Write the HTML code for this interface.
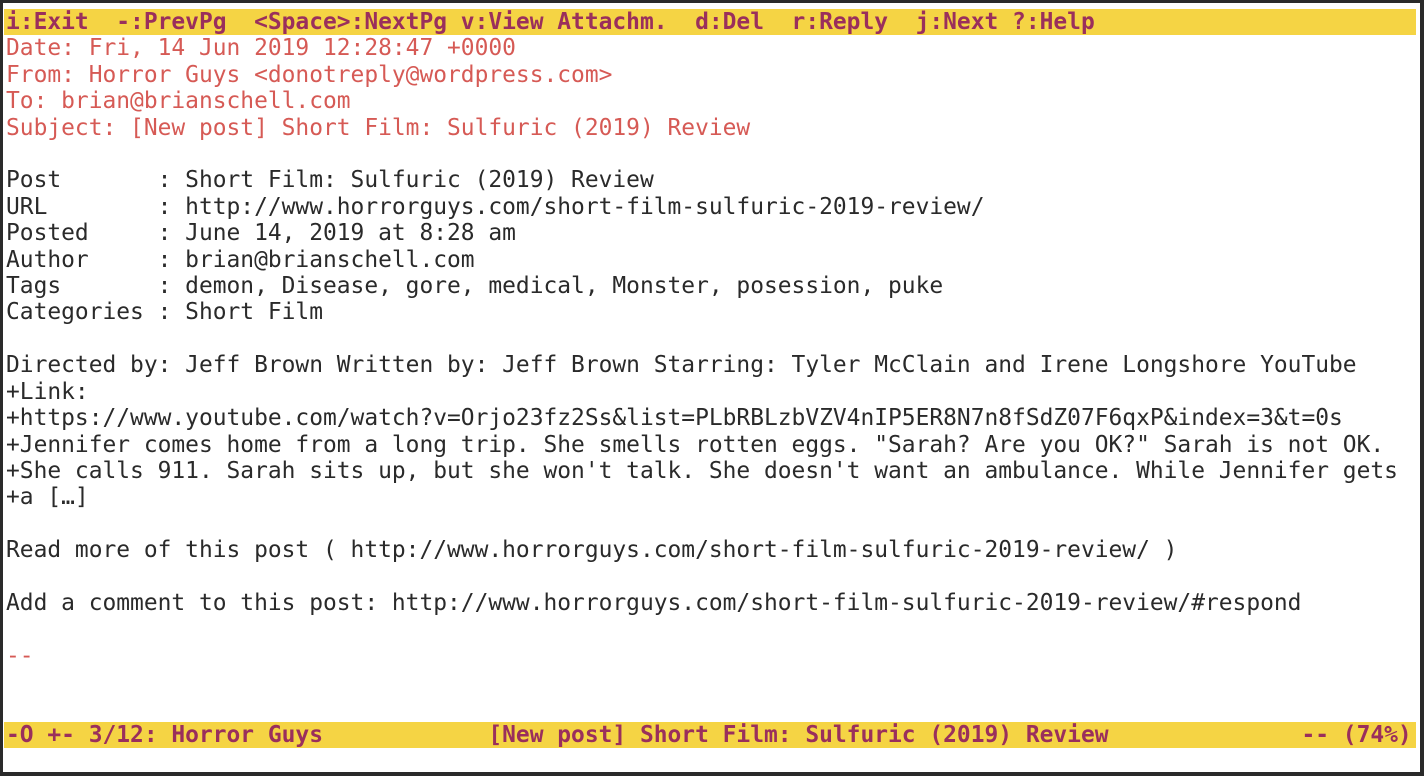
<!DOCTYPE html>
<html><head><meta charset="utf-8"><style>
html,body{margin:0;padding:0;background:#fff;width:1425px;height:777px;overflow:hidden}
.frame{position:absolute;left:0;top:0;width:1417px;height:769px;border:3px solid #2a2a2a;border-right-width:4px;border-bottom-width:4px}
.t{position:absolute;left:6px;top:9px;width:1410px;font-family:"DejaVu Sans Mono","Liberation Mono",monospace;font-size:22.9px;line-height:26.4px;color:#2a2a2a;white-space:pre}
.bar{background:#f5d444;color:#9a2f5c;font-weight:bold;margin-left:-2px;padding-left:2px}
.h{color:#d65a55}
</style></head><body>
<div class="frame"></div>
<div class="t"><div class="bar">i:Exit  -:PrevPg  &lt;Space&gt;:NextPg v:View Attachm.  d:Del  r:Reply  j:Next ?:Help</div><div class="h">Date: Fri, 14 Jun 2019 12:28:47 +0000
From: Horror Guys &lt;donotreply@wordpress.com&gt;
To: brian@brianschell.com
Subject: [New post] Short Film: Sulfuric (2019) Review</div>
Post       : Short Film: Sulfuric (2019) Review
URL        : http://www.horrorguys.com/short-film-sulfuric-2019-review/
Posted     : June 14, 2019 at 8:28 am
Author     : brian@brianschell.com
Tags       : demon, Disease, gore, medical, Monster, posession, puke
Categories : Short Film

Directed by: Jeff Brown Written by: Jeff Brown Starring: Tyler McClain and Irene Longshore YouTube
+Link:
+https://www.youtube.com/watch?v=Orjo23fz2Ss&amp;list=PLbRBLzbVZV4nIP5ER8N7n8fSdZ07F6qxP&amp;index=3&amp;t=0s
+Jennifer comes home from a long trip. She smells rotten eggs. "Sarah? Are you OK?" Sarah is not OK.
+She calls 911. Sarah sits up, but she won't talk. She doesn't want an ambulance. While Jennifer gets
+a […]

Read more of this post ( http://www.horrorguys.com/short-film-sulfuric-2019-review/ )

Add a comment to this post: http://www.horrorguys.com/short-film-sulfuric-2019-review/#respond

<span class="h">--</span>


<div class="bar">-O +- 3/12: Horror Guys            [New post] Short Film: Sulfuric (2019) Review              -- (74%)</div></div>
</body></html>
